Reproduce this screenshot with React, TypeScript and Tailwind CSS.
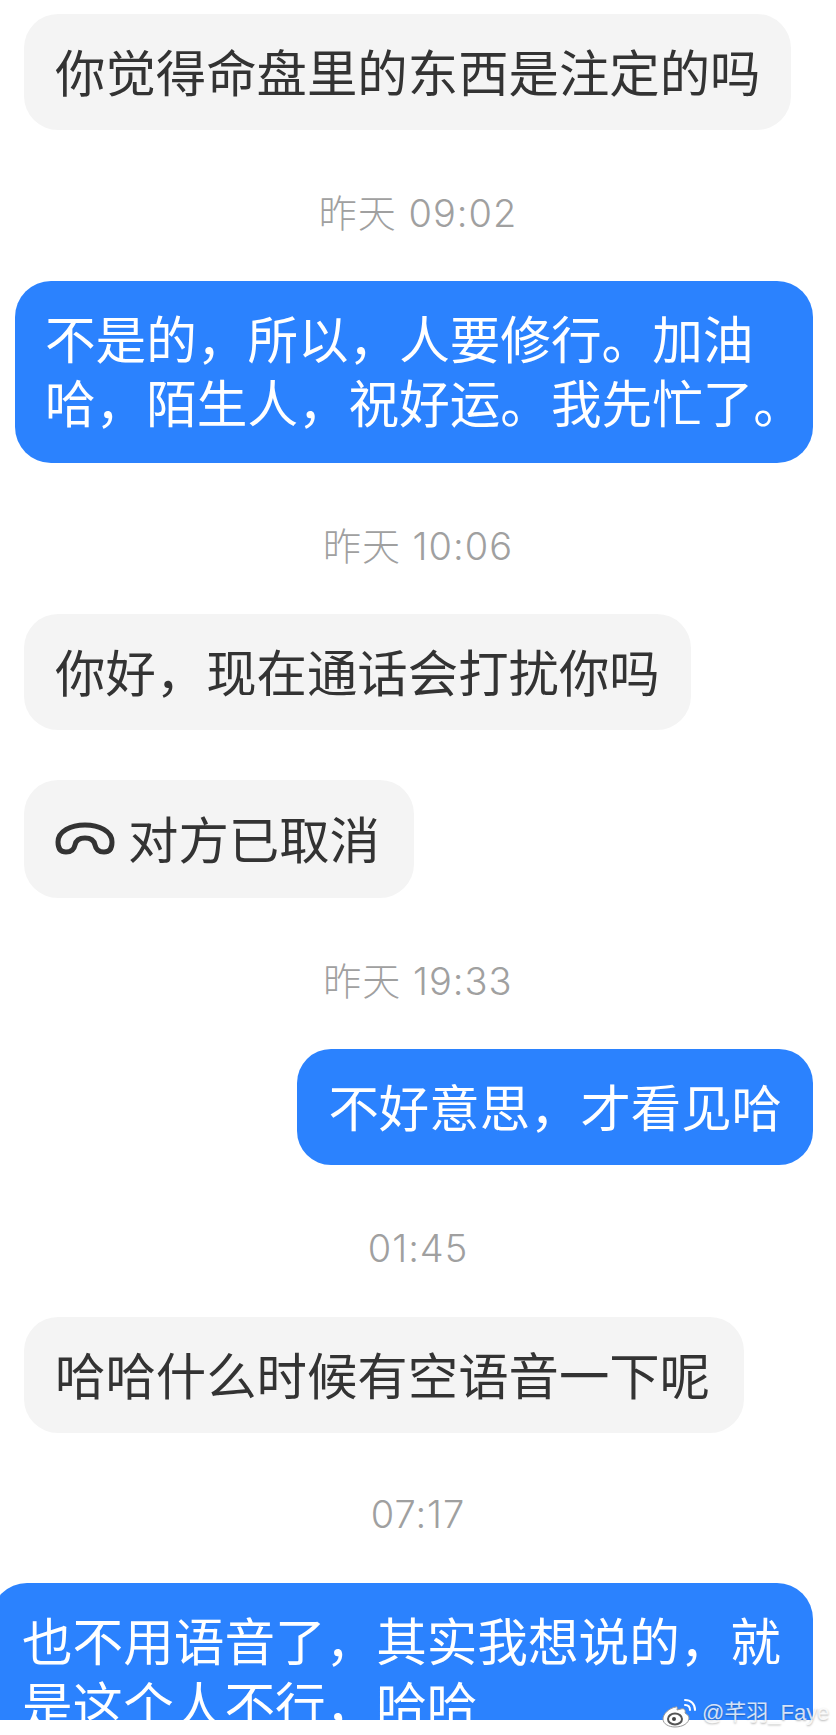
import React from "react";

const font = { fontFamily: '"Noto Sans CJK SC", "Noto Sans", sans-serif' };
const timeFont = { fontFamily: 'Inter, "Noto Sans CJK SC", sans-serif' };

function Time({ children, className }: { children: React.ReactNode; className: string }) {
  return (
    <div className={`text-center text-[38px] leading-[44px] tracking-[1px] text-[#a0a0a0] font-light ${className}`} style={timeFont}>
      {children}
    </div>
  );
}

function Left({ children, className, bubble }: { children: React.ReactNode; className: string; bubble: string }) {
  return (
    <div className={`flex ${className}`}>
      <div
        className={`ml-[24px] flex items-center whitespace-nowrap rounded-[34px] bg-[#f4f4f4] pb-[3px] pl-[31px] text-[50.4px] font-normal leading-[60px] text-[#333333] ${bubble}`}
      >
        {children}
      </div>
    </div>
  );
}

export default function App() {
  return (
    <div className="relative h-[1735px] w-[836px] overflow-hidden bg-white" style={font}>
      <div className="h-[1720px] overflow-hidden pt-[14px]">
        <Left className="" bubble="h-[116px] pr-[31px]">你觉得命盘里的东西是注定的吗</Left>
        <Time className="mt-[61px]">昨天 09:02</Time>

        <div className="mt-[46px] ml-[15px] h-[182px] w-[798px] whitespace-nowrap rounded-[36px] bg-[#2b82fe] pl-[30px] pt-[24px] text-[50.6px] font-normal leading-[64px] text-white">
          <div>不是的，所以，人要修行。加油</div>
          <div>哈，陌生人，祝好运。我先忙了。</div>
        </div>

        <Time className="mt-[61px]">昨天 10:06</Time>
        <Left className="mt-[46px]" bubble="h-[116px] pr-[31px]">你好，现在通话会打扰你吗</Left>
        <Left className="mt-[50px]" bubble="h-[118px] pr-[34px]">
          <svg width="62" height="36" viewBox="0 0 62 36" fill="none" className="mr-[9px] -ml-[1px] mt-[3px] shrink-0">
            <path
              d="M4 21C4 10 17 4 31 4C45 4 58 10 58 21C58 28 55 31 50 31C45 31 42 29 41 24C40 19 37 17 31 17C25 17 22 19 21 24C20 29 17 31 12 31C7 31 4 28 4 21Z"
              stroke="#333333"
              strokeWidth="5"
              strokeLinejoin="round"
            />
          </svg>
          <span className="ml-[3px]">对方已取消</span>
        </Left>

        <Time className="mt-[61px]">昨天 19:33</Time>

        <div className="mt-[46px] flex justify-end pr-[23px]">
          <div className="flex h-[116px] items-center whitespace-nowrap rounded-[34px] bg-[#2b82fe] pb-[3px] px-[31px] text-[50.4px] font-normal leading-[60px] text-white">
            不好意思，才看见哈
          </div>
        </div>

        <Time className="mt-[61px]">01:45</Time>
        <Left className="mt-[47px]" bubble="h-[116px] pr-[34px]">哈哈什么时候有空语音一下呢</Left>
        <Time className="mt-[59px]">07:17</Time>

        <div className="mt-[47px] -ml-[9px] h-[200px] w-[822px] whitespace-nowrap rounded-t-[36px] bg-[#2b82fe] pl-[31px] pt-[24px] text-[50.6px] font-normal leading-[64px] text-white">
          <div>也不用语音了，其实我想说的，就</div>
          <div>是这个人不行，哈哈</div>
        </div>
      </div>

      <div
        className="absolute left-[662px] top-[1698px] flex items-center gap-[6px] whitespace-nowrap text-[22px] leading-[30px] text-white/80"
        style={{ fontFamily: '"Liberation Sans", "Noto Sans CJK SC", sans-serif', textShadow: "0 1px 2px rgba(0,0,0,0.3)" }}
      >
        <svg width="34" height="30" viewBox="0 0 34 30" fill="none">
          <path d="M14 9C7 10 1 16 1 21c0 5 6 8 12 8 8 0 14-4 14-9 0-3-3-4-4-5 1-3-1-5-4-4l-4 1c1-3-1-4-1-3Z" fill="#ffffff" stroke="#9a9a9a" strokeWidth="1" />
          <ellipse cx="13" cy="21" rx="7" ry="5.500" fill="#ffffff" stroke="#555555" strokeWidth="2" />
          <circle cx="12" cy="21" r="2" fill="#444444" />
          <path d="M23 7c3 0 5 2 5 5M23 2c6 0 10 4 10 10" stroke="#ffffff" strokeWidth="2" strokeLinecap="round" />
        </svg>
        <span>@芊羽_Faye</span>
      </div>
    </div>
  );
}
